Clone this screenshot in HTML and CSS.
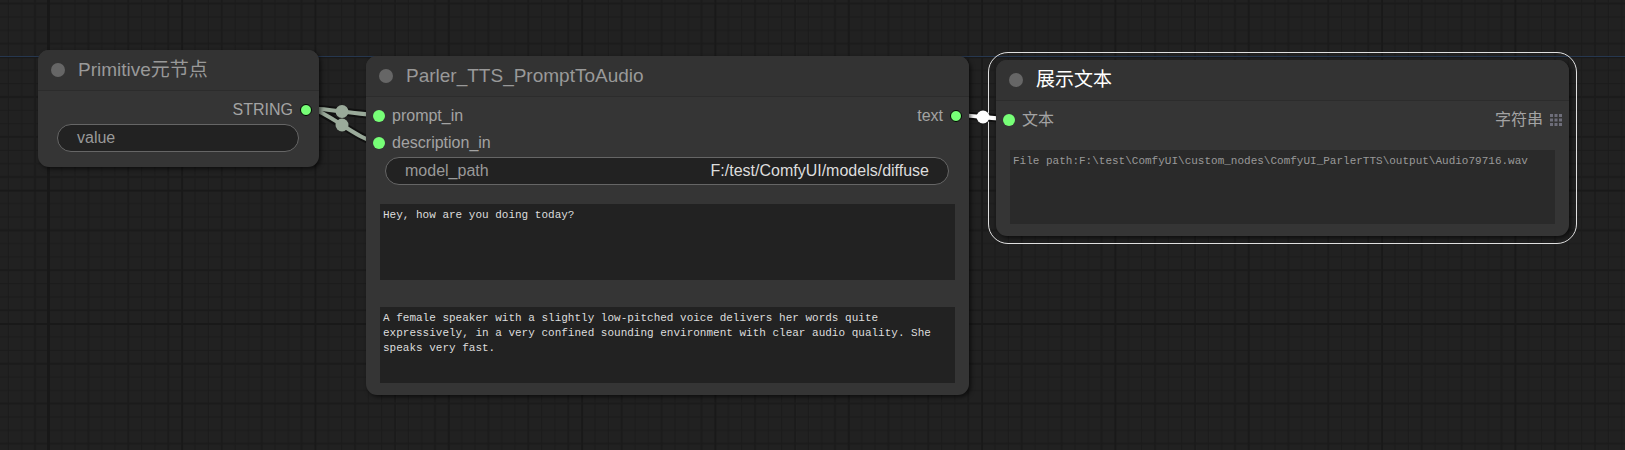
FILE: index.html
```
<!DOCTYPE html>
<html lang="zh">
<head>
<meta charset="utf-8">
<title>ComfyUI</title>
<link rel="stylesheet" href="styles.css">
</head>
<body>
<main class="canvas">
  <svg class="grid" aria-hidden="true">
    <defs>
      <pattern id="grid" width="100" height="100" patternUnits="userSpaceOnUse" patternTransform="translate(47.7 56.3) scale(1.3333)">
        <path class="grid-minor" d="M10.5 0V100M20.5 0V100M40.5 0V100M50.5 0V100M70.5 0V100M80.5 0V100M0 10.5H100M0 20.5H100M0 40.5H100M0 50.5H100M0 70.5H100M0 80.5H100"/>
        <path class="grid-mid" d="M30.5 0V100M60.5 0V100M90.5 0V100M0 30.5H100M0 60.5H100M0 90.5H100"/>
        <path class="grid-major" d="M.8 0V100M0 .8H100"/>
      </pattern>
    </defs>
    <rect width="100%" height="100%" fill="url(#grid)"/>
    <rect class="axis" y="56" width="100%" height="1"/>
    <rect class="grid-column" x="47" width="3" height="100%"/>
  </svg>

  <svg class="links" aria-hidden="true">
    <g class="link">
      <path class="link-edge" d="M305 108C324 108 360 115 379 115M305 108C326 108 358 142 379 142"/>
      <path class="link-line" d="M305 108C324 108 360 115 379 115"/>
      <path class="link-line" d="M305 108C326 108 358 142 379 142"/>
      <circle cx="342" cy="111.500" r="6.500"/>
      <circle cx="342" cy="125" r="6.500"/>
    </g>
    <g class="link link-active">
      <path class="link-edge" d="M956 115C969 115 996 119 1009 119"/>
      <path class="link-line" d="M956 115C969 115 996 119 1009 119"/>
      <circle cx="983" cy="117" r="6.500"/>
    </g>
  </svg>

  <section class="node node-primitive">
    <header class="node-title"><span class="node-dot"></span><h2>Primitive元节点</h2></header>
    <div class="node-body">
      <div class="slot"><span class="output">STRING<i class="port port-out"></i></span></div>
      <label class="widget">value<input class="widget-value" type="text"></label>
    </div>
  </section>

  <section class="node node-parler">
    <header class="node-title"><span class="node-dot"></span><h2>Parler_TTS_PromptToAudio</h2></header>
    <div class="node-body">
      <div class="slot">
        <span class="input"><i class="port"></i>prompt_in</span>
        <span class="output">text<i class="port port-out"></i></span>
      </div>
      <div class="slot"><span class="input"><i class="port"></i>description_in</span></div>
      <label class="widget">model_path<input class="widget-value" type="text" value="F:/test/ComfyUI/models/diffuse"></label>
      <textarea class="text-area" aria-label="prompt" spellcheck="false">Hey, how are you doing today?</textarea>
      <textarea class="text-area" aria-label="description" spellcheck="false">A female speaker with a slightly low-pitched voice delivers her words quite expressively, in a very confined sounding environment with clear audio quality. She speaks very fast.</textarea>
    </div>
  </section>

  <section class="node node-show selected">
    <header class="node-title"><span class="node-dot"></span><h2>展示文本</h2></header>
    <div class="node-body">
      <div class="slot">
        <span class="input"><i class="port"></i>文本</span>
        <span class="output">字符串
          <svg class="port-list" viewBox="0 0 12 12" aria-hidden="true"><path d="M0 0h3v3H0zM4.500 0h3v3h-3zM9 0h3v3H9zM0 4.500h3v3H0zM4.500 4.500h3v3h-3zM9 4.500h3v3H9zM0 9h3v3H0zM4.500 9h3v3h-3zM9 9h3v3H9z"/></svg>
        </span>
      </div>
      <textarea class="text-area" aria-label="文本" readonly spellcheck="false">File path:F:\test\ComfyUI\custom_nodes\ComfyUI_ParlerTTS\output\Audio79716.wav</textarea>
    </div>
  </section>
</main>
</body>
</html>
```
FILE: styles.css
```
* { box-sizing: border-box; }

body {
  margin: 0;
  background: #212121;
  font: 16px/20px "Liberation Sans", Arial, "Noto Sans CJK SC", sans-serif;
  color: #a3a3a3;
}

.canvas {
  position: relative;
  isolation: isolate;
  min-height: 100vh;
  overflow: hidden;
}

.grid, .links {
  position: absolute;
  inset: 0;
  width: 100%;
  height: 100%;
}

.grid { z-index: -2; }
.grid path { fill: none; stroke: #1b1b1b; }
.grid .grid-minor { stroke-width: 0.8; }
.grid .grid-mid { stroke-width: 1.5; }
.grid .grid-major { stroke: #191919; stroke-width: 1.5; }
.axis { fill: #26374f; }
.grid-column { fill: #181818; }

.link { fill: #9aaa9a; }
.link path { fill: none; }
.link-edge { stroke: #101010; stroke-width: 8; }
.link .link-line { stroke: #9aaa9a; stroke-width: 4; }
.link-active { fill: #fff; }
.link-active .link-line { stroke: #fff; }

.node {
  position: absolute;
  border-radius: 11px;
  background: #353535;
  box-shadow: 2px 2px 4px rgba(0, 0, 0, 0.6);
}

.node-primitive { left: 38px; top: 50px; width: 281px; }
.node-parler { left: 366px; top: 56px; width: 603px; }
.node-show { left: 996px; top: 60px; width: 573px; }

.selected::before {
  content: "";
  position: absolute;
  z-index: -1;
  inset: -8px;
  border: 1px solid #e0e0e0;
  border-radius: 20px;
}

.link.link-active .link-line { stroke: #fff; }

.node-title {
  display: flex;
  align-items: center;
  gap: 13px;
  height: 41px;
  padding-left: 13px;
  border-bottom: 1px solid #2c2c2c;
  border-radius: 11px 11px 0 0;
  background: #333;
}

.node-title h2 {
  margin: 0;
  font-size: 19px;
  font-weight: 400;
  line-height: 24px;
  color: #999;
}

.selected .node-title h2 { color: #fff; }

.node-dot {
  width: 14px;
  height: 14px;
  border-radius: 50%;
  background: #666;
}

.node-body {
  display: flex;
  flex-direction: column;
  padding: 5px 14px 12px;
}

.node-primitive .node-body { padding-bottom: 15px; }

.slot {
  display: flex;
  align-items: center;
  height: 27px;
  margin: 0 -7px;
}

.input, .output {
  display: flex;
  align-items: center;
  gap: 7px;
}

.output { margin-left: auto; }

.port {
  width: 12px;
  height: 12px;
  border-radius: 50%;
  background: #7f7;
}

.port-out { border: 1px solid #000; }

.port-list {
  width: 12px;
  height: 12px;
  fill: #6e6e7a;
}

.widget {
  display: flex;
  align-items: center;
  height: 28px;
  margin: 1px 6px 0 5px;
  padding: 0 19px;
  border: 1px solid #666;
  border-radius: 14px;
  background: #222;
  color: #999;
}

.widget-value {
  flex: 1;
  min-width: 0;
  padding: 0;
  border: 0;
  outline: 0;
  background: transparent;
  font: inherit;
  color: #ddd;
  text-align: right;
}

.text-area {
  display: block;
  height: 76px;
  margin-top: 27px;
  padding: 4px 3px;
  border: 0;
  outline: 0;
  resize: none;
  overflow: hidden;
  background: #222;
  font: 11px/15px "Liberation Mono", "Courier New", monospace;
  color: #ddd;
}

.widget + .text-area { margin-top: 19px; }

.node-show .text-area {
  height: 74px;
  margin-top: 17px;
  background: #2a2a2a;
  color: #999;
}
```
